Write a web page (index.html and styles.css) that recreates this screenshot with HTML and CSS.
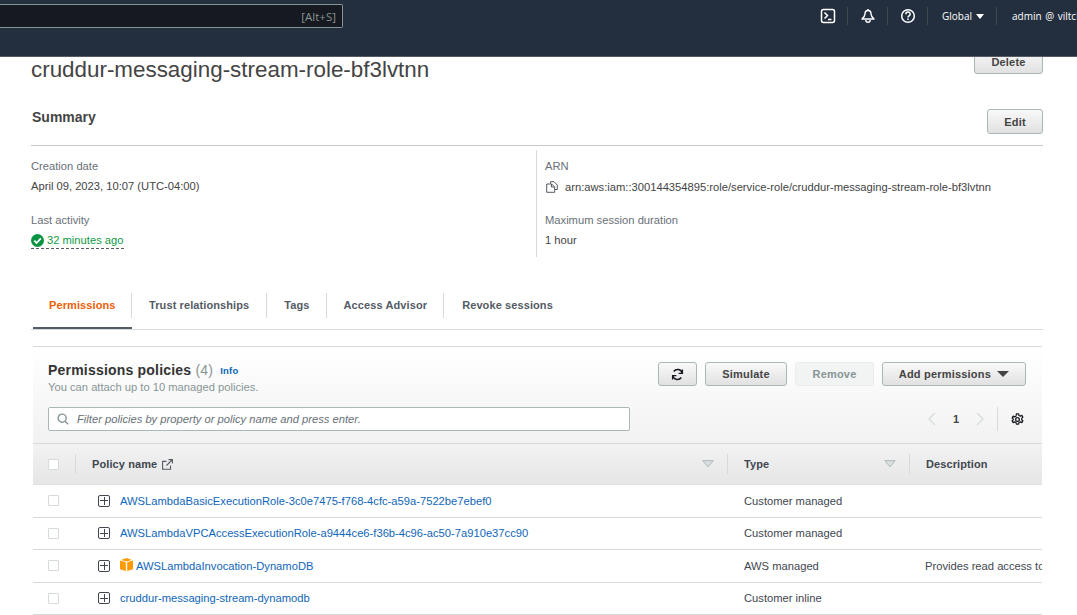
FILE: index.html
```html
<!DOCTYPE html>
<html lang="en">
<head>
    <meta charset="UTF-8">
    <meta name="viewport" content="width=device-width, initial-scale=1.0">
    <title>cruddur-messaging-stream-role-bf3lvtnn</title>
    <link rel="stylesheet" href="styles.css">
</head>
<body>
    <header class="top-nav">
        <div class="search-box"><span>[Alt+S]</span></div>
        <div class="nav-items">
            <span class="nav-icon">
                <svg width="16" height="16" viewBox="0 0 16 16" fill="none" stroke="#fff"><rect x="1.500" y="1.500" width="13" height="13" rx="2" stroke-width="1.500"/><path d="M4.500 4.500 7.500 7.500 4.500 10.500" stroke-width="1.500"/><path d="M8 11.500h3.500" stroke-width="1.500"/></svg>
            </span>
            <span class="nav-icon">
                <svg width="16" height="16" viewBox="0 0 16 16" fill="none" stroke="#fff" stroke-width="1.400"><path d="M8 1v1.500"/><path d="M8 2.500C6 2.500 5 4 5 6c0 2-1 3-3 5h12C12 9 11 8 11 6c0-2-1-3.500-3-3.500Z" stroke-linejoin="round"/><path d="M5.800 12a2.200 2.200 0 0 0 4.400 0"/></svg>
            </span>
            <span class="nav-icon">
                <svg width="16" height="16" viewBox="0 0 16 16" fill="none" stroke="#fff" stroke-width="1.500"><circle cx="8" cy="8" r="6.300"/><path d="M5.800 6.300c0-3 4.400-3 4.400-.2 0 1.700-2.200 1.800-2.200 3.400"/><path d="M8 10.500v1.500"/></svg>
            </span>
            <span class="nav-region">Global <i class="nav-caret"></i></span>
            <span class="nav-user">admin @ viltcloud</span>
        </div>
    </header>

    <main class="page">
        <div class="title-row">
            <h1>cruddur-messaging-stream-role-bf3lvtnn</h1>
            <button class="btn btn-delete">Delete</button>
        </div>

        <div class="summary-head">
            <h2>Summary</h2>
            <button class="btn btn-edit">Edit</button>
        </div>

        <section class="summary">
            <div class="summary-col">
                <div class="field">
                    <div class="field-label">Creation date</div>
                    <div class="field-value">April 09, 2023, 10:07 (UTC-04:00)</div>
                </div>
                <div class="field">
                    <div class="field-label">Last activity</div>
                    <div class="field-value activity">
                        <svg width="13" height="13" viewBox="0 0 13 13"><circle cx="6.500" cy="6.500" r="6.500" fill="#0b9444"/><path d="M3.300 6.700 5.600 9 9.800 4.400" fill="none" stroke="#fff" stroke-width="1.800"/></svg>
                        32 minutes ago
                    </div>
                </div>
            </div>
            <div class="summary-col summary-col-right">
                <div class="field">
                    <div class="field-label">ARN</div>
                    <div class="field-value arn">
                        <svg width="12" height="12" viewBox="0 0 12 12" fill="none" stroke="#545b64"><path d="M4.500 2.500V.7h3.500l3.300 3.300v4.500h-2.500"/><path d="M.7 3h5l3 3v5.300H.7Z"/><path d="M5.500 3v3h3"/></svg>
                        arn:aws:iam::300144354895:role/service-role/cruddur-messaging-stream-role-bf3lvtnn
                    </div>
                </div>
                <div class="field">
                    <div class="field-label">Maximum session duration</div>
                    <div class="field-value">1 hour</div>
                </div>
            </div>
        </section>

        <nav class="tabs">
            <a class="tab tab-active">Permissions</a>
            <a class="tab">Trust relationships</a>
            <a class="tab tab-narrow">Tags</a>
            <a class="tab tab-narrow">Access Advisor</a>
            <a class="tab tab-last">Revoke sessions</a>
        </nav>

        <section class="policies">
            <div class="policies-head">
                <div class="policies-top">
                    <div class="policies-title">
                        <h3>Permissions policies <span class="count">(4)</span> <a class="info">Info</a></h3>
                        <p class="hint">You can attach up to 10 managed policies.</p>
                    </div>
                    <div class="actions">
                        <button class="btn btn-icon">
                            <svg width="13" height="13" viewBox="0 0 14 14" fill="none" stroke="#16191f" stroke-width="1.700"><path d="M12 5.500A5 5 0 0 0 3 3.800"/><path d="M2 8.500a5 5 0 0 0 9 1.700"/><path d="M12.300 1.500v4.200H8.200" stroke-width="1.400"/><path d="M1.700 12.500V8.300h4.100" stroke-width="1.400"/></svg>
                        </button>
                        <button class="btn btn-simulate">Simulate</button>
                        <button class="btn btn-remove">Remove</button>
                        <button class="btn btn-add">Add permissions <i class="add-caret"></i></button>
                    </div>
                </div>
                <div class="policies-filter">
                    <div class="filter-input">
                        <svg width="12" height="12" viewBox="0 0 14 14" fill="none" stroke="#879596" stroke-width="1.700"><circle cx="6" cy="6" r="4.700"/><path d="M9.500 9.500 13 13"/></svg>
                        <span>Filter policies by property or policy name and press enter.</span>
                    </div>
                    <div class="pager">
                        <svg width="10" height="14" viewBox="0 0 10 14" fill="none" stroke="#d5dbdb" stroke-width="1.300"><path d="M8 1 2 7l6 6"/></svg>
                        <b>1</b>
                        <svg width="10" height="14" viewBox="0 0 10 14" fill="none" stroke="#d5dbdb" stroke-width="1.300"><path d="M2 1l6 6-6 6"/></svg>
                        <span class="pager-line"></span>
                        <svg width="13" height="13" viewBox="0 0 14 14" fill="none" stroke="#16191f"><circle cx="7" cy="7" r="2" stroke-width="1.400"/><path d="M5.800 1h2.400l.4 1.700 1.500.7 1.600-.8 1.100 2-1.300 1.200v1.400l1.300 1.200-1.100 2-1.600-.8-1.500.7-.4 1.700H5.800l-.4-1.700-1.500-.7-1.600.8-1.100-2 1.300-1.200V6.600L1.200 5.400l1.100-2 1.600.8 1.500-.7Z" stroke-width="1.300" stroke-linejoin="round"/></svg>
                    </div>
                </div>
            </div>

            <div class="table-head">
                <div class="cell-check"><span class="checkbox"></span></div>
                <div class="th">
                    <span>Policy name</span>
                    <svg class="ext" width="11" height="11" viewBox="0 0 11 11" fill="none" stroke="#545b64" stroke-width="1.100"><path d="M8.500 6.500v3.800H.6V2.400h3.900"/><path d="M4.500 6.500 10 1"/><path d="M6.500.6h3.900v3.900"/></svg>
                    <svg class="sort" width="12" height="8" viewBox="0 0 12 8"><path d="M.8.700h10.400L6 6.800Z" fill="#dcdfdf" stroke="#aab7b8"/></svg>
                </div>
                <div class="th">
                    <span>Type</span>
                    <svg class="sort" width="12" height="8" viewBox="0 0 12 8"><path d="M.8.700h10.400L6 6.800Z" fill="#dcdfdf" stroke="#aab7b8"/></svg>
                </div>
                <div class="th"><span>Description</span></div>
            </div>

            <div class="table-row">
                <div class="cell-check"><span class="checkbox"></span></div>
                <div class="cell-name"><i class="expand"></i><a>AWSLambdaBasicExecutionRole-3c0e7475-f768-4cfc-a59a-7522be7ebef0</a></div>
                <div class="cell-type">Customer managed</div>
                <div class="cell-desc"></div>
            </div>
            <div class="table-row">
                <div class="cell-check"><span class="checkbox"></span></div>
                <div class="cell-name"><i class="expand"></i><a>AWSLambdaVPCAccessExecutionRole-a9444ce6-f36b-4c96-ac50-7a910e37cc90</a></div>
                <div class="cell-type">Customer managed</div>
                <div class="cell-desc"></div>
            </div>
            <div class="table-row">
                <div class="cell-check"><span class="checkbox"></span></div>
                <div class="cell-name">
                    <i class="expand"></i>
                    <svg class="cube" width="13" height="13" viewBox="0 0 13 13"><path d="M0 2.500 5.800 4.300V13L.8 11.500 0 11Z" fill="#f90"/><path d="M13 2.500 7.200 4.300V13l5-1.500.8-.5Z" fill="#f90"/><path d="M6.500 0 12 2 6.500 3.600 1 2Z" fill="#f90"/></svg>
                    <a>AWSLambdaInvocation-DynamoDB</a>
                </div>
                <div class="cell-type">AWS managed</div>
                <div class="cell-desc">Provides read access to</div>
            </div>
            <div class="table-row">
                <div class="cell-check"><span class="checkbox"></span></div>
                <div class="cell-name"><i class="expand"></i><a>cruddur-messaging-stream-dynamodb</a></div>
                <div class="cell-type">Customer inline</div>
                <div class="cell-desc"></div>
            </div>
        </section>
    </main>
</body>
</html>
```

FILE: styles.css
```css
* {
    box-sizing: border-box;
}
html, body {
    height: 100%;
}
body {
    margin: 0;
    overflow: hidden;
    background-color: #fff;
    color: #444;
    font-family: "Liberation Sans", Arial, sans-serif;
    font-size: 11.200px;
}
a {
    color: #1066b8;
}

/* top bar */
.top-nav {
    height: 57px;
    background-color: #232f3e;
    border-bottom: 1px solid #545b64;
    display: flex;
    justify-content: space-between;
    align-items: flex-start;
    font-family: "Open Sans", sans-serif;
    color: #fff;
}
.search-box {
    width: 343px;
    height: 24px;
    margin-top: 4px;
    background-color: #16191f;
    border: 1px solid #879596;
    border-left: 0;
    border-radius: 0 2px 2px 0;
    color: #879596;
    font-size: 11.500px;
    display: flex;
    align-items: center;
    justify-content: flex-end;
    padding-right: 6px;
}
.nav-items {
    width: 269px;
    height: 18px;
    margin-top: 7px;
    display: flex;
    align-items: center;
    white-space: nowrap;
    overflow: hidden;
    font-size: 10px;
}
.nav-icon {
    width: 40px;
    height: 18px;
    flex: none;
    display: flex;
    align-items: center;
    justify-content: center;
    border-right: 1px solid #414750;
}
.nav-region {
    width: 69px;
    height: 18px;
    flex: none;
    line-height: 18px;
    padding-left: 14px;
    border-right: 1px solid #414750;
}
.nav-caret {
    display: inline-block;
    border: 4px solid transparent;
    border-top: 5px solid #fff;
    border-bottom: 0;
    margin-left: 1px;
    vertical-align: 1px;
}
.nav-user {
    flex: none;
    padding-left: 15px;
    word-spacing: 1px;
}

/* page */
.page {
    padding: 0 34px 0 31px;
}
.title-row {
    height: 49px;
    display: flex;
    justify-content: space-between;
    align-items: flex-start;
    overflow: hidden;
}
h1 {
    margin: 0;
    font-size: 22.400px;
    line-height: 25px;
    font-weight: 400;
    color: #444;
}
.btn {
    height: 25px;
    padding: 0;
    background: linear-gradient(#f9f9f9, #e1e1e1);
    border: 1px solid #aab7b8;
    border-radius: 3px;
    color: #444;
    font-family: "Liberation Sans", Arial, sans-serif;
    font-size: 11px;
    font-weight: 700;
    letter-spacing: .2px;
}
.btn-delete {
    width: 69px;
    margin-top: -8px;
}
.summary-head {
    height: 40px;
    border-bottom: 1px solid #c9c9c9;
    display: flex;
    justify-content: space-between;
    align-items: flex-start;
}
h2 {
    margin: 3px 0 0 1px;
    font-size: 14px;
    line-height: 16px;
    color: #444;
}
.btn-edit {
    width: 56px;
    margin-top: 3px;
}
.summary {
    margin-top: 4px;
    display: flex;
    height: 107px;
}
.summary-col {
    width: 505px;
    padding-top: 9px;
}
.summary-col-right {
    flex: 1;
    padding-left: 8px;
    border-left: 1px solid #d5dbdb;
}
.field {
    height: 54px;
}
.field-label {
    line-height: 14px;
    color: #687078;
}
.field-value {
    margin-top: 6px;
    line-height: 14px;
    display: flex;
    align-items: center;
    gap: 3px;
}
.activity {
    width: 93px;
    padding-bottom: 1px;
    border-bottom: 1px dashed #545b64;
    color: #119b45;
    white-space: nowrap;
}
.arn {
    margin-top: 7px;
    gap: 7px;
    padding-left: 1px;
}

/* tabs */
.tabs {
    margin-top: 36px;
    height: 37px;
    border-bottom: 1px solid #d5dbdb;
    display: flex;
    padding-left: 2px;
    align-items: flex-start;
}
.tab {
    height: 25px;
    padding: 0 17px;
    line-height: 24px;
    font-weight: 700;
    font-size: 11px;
    letter-spacing: .1px;
    color: #545b64;
    border-right: 1px solid #d5dbdb;
}
.tab-narrow {
    padding-right: 16px;
}
.tab-last {
    padding-left: 18px;
    border-right: 0;
}
.tab-active {
    height: 36px;
    width: 99px;
    padding: 0 16px;
    color: #eb5f07;
    position: relative;
    border-right: 0;
}
.tab-active::before {
    content: "";
    position: absolute;
    left: 0;
    right: 0;
    bottom: 0;
    height: 2px;
    background-color: #545b64;
}
.tab-active::after {
    content: "";
    position: absolute;
    right: 0;
    top: 0;
    width: 1px;
    height: 25px;
    background-color: #d5dbdb;
}

/* policies */
.policies {
    margin: 16px 1px 0 2px;
    border-top: 1px solid #d5dbdb;
}
.policies-head {
    height: 97px;
    padding: 0 16px 0 15px;
    background: linear-gradient(#fff, #f2f2f2);
    border-bottom: 1px solid #d5dbdb;
}
.policies-top {
    display: flex;
    justify-content: space-between;
    padding-top: 14px;
    height: 60px;
}
.policies-title {
    padding-top: 1px;
}
h3 {
    margin: 0;
    font-size: 14px;
    line-height: 17px;
    letter-spacing: .2px;
    color: #333;
}
.count {
    font-weight: 400;
    color: #879596;
}
.info {
    margin-left: 3px;
    font-size: 9.500px;
    vertical-align: 1px;
}
.hint {
    margin: 1px 0 0;
    line-height: 15px;
    color: #879596;
}
.actions {
    display: flex;
    gap: 8px;
    margin-top: 1px;
}
.actions .btn {
    height: 24px;
}
.btn-icon {
    width: 39px;
    display: flex;
    align-items: center;
    justify-content: center;
}
.btn-simulate {
    width: 82px;
}
.btn-remove {
    width: 79px;
    background: #f2f3f3;
    border-color: #eaeded;
    color: #879596;
}
.btn-add {
    width: 144px;
}
.add-caret {
    display: inline-block;
    margin-left: 3px;
    border: 6px solid transparent;
    border-top: 6px solid #444;
    border-bottom: 0;
    vertical-align: 1px;
}
.policies-filter {
    display: flex;
    justify-content: space-between;
    align-items: flex-start;
}
.filter-input {
    width: 582px;
    height: 24px;
    background-color: #fff;
    border: 1px solid #aab7b8;
    border-radius: 2px;
    padding-left: 8px;
    display: flex;
    align-items: center;
    gap: 8px;
    font-style: italic;
    color: #687078;
}
.pager {
    height: 24px;
    margin-right: 2px;
    display: flex;
    align-items: center;
    font-size: 11px;
}
.pager b {
    margin: 0 16px;
}
.pager-line {
    width: 1px;
    height: 24px;
    margin: 0 13px 0 12px;
    background-color: #d5dbdb;
}

/* table */
.table-head,
.table-row {
    display: grid;
    grid-template-columns: 42px 652px 182px 133px;
    overflow: hidden;
}
.table-head {
    height: 41px;
    align-items: center;
    background: linear-gradient(#f2f2f2, #e6e6e6);
    border-bottom: 1px solid #e1e1e1;
}
.cell-check {
    padding-left: 15px;
    display: flex;
    align-items: center;
}
.checkbox {
    width: 11px;
    height: 11px;
    background-color: #fff;
    border: 1px solid #d5dbdb;
    border-radius: 1px;
}
.th {
    height: 20px;
    padding-left: 16px;
    padding-right: 13px;
    border-left: 1px solid #d5dbdb;
    display: flex;
    align-items: center;
    font-size: 11px;
    font-weight: 700;
    letter-spacing: .1px;
    color: #414750;
}
.ext {
    margin-left: 5px;
}
.sort {
    margin-left: auto;
}
.table-row {
    height: 32.500px;
    align-items: center;
    border-bottom: 1px solid #d5dbdb;
    white-space: nowrap;
}
.cell-name {
    display: flex;
    align-items: center;
    padding-left: 23px;
}
.expand {
    width: 12px;
    height: 12px;
    margin-right: 10px;
    flex: none;
    border: 1px solid #414750;
    border-radius: 2px;
    background: linear-gradient(#414750, #414750) center / 8px 1px no-repeat,
                linear-gradient(#414750, #414750) center / 1px 8px no-repeat;
}
.cube {
    margin: -3px 3px 0 0;
}
.cell-type {
    padding-left: 17px;
    color: #414750;
}
.cell-desc {
    overflow: hidden;
    color: #414750;
    margin-left: -1px;
    padding-left: 17px;
}
```
